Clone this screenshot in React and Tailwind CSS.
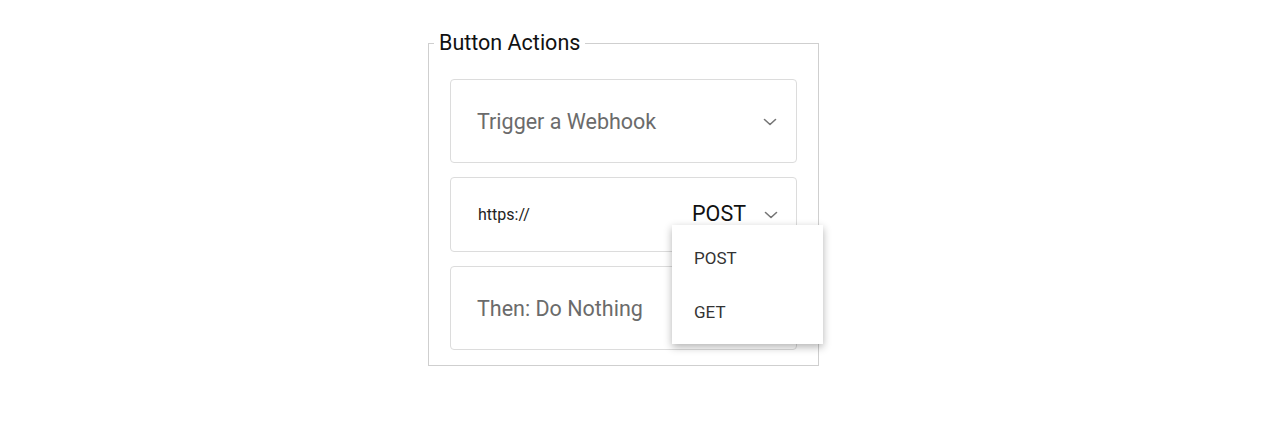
import React from "react";

const Chevron = () => (
  <svg width="14" height="8" viewBox="0 0 14 8" fill="none" className="shrink-0">
    <path d="M1.5 1.5L7 6.5L12.5 1.5" stroke="#757575" strokeWidth="1.6" strokeLinecap="round" strokeLinejoin="round" />
  </svg>
);

const App = () => {
  return (
    <div className="min-h-[431px] bg-white pl-[428px] pt-[31px]" style={{ fontFamily: "Roboto, 'Liberation Sans', sans-serif" }}>
      <fieldset className="w-[391px] border border-[#cfcfcf] px-[21px] pt-[24px] pb-[15px] m-0">
        <legend className="ml-[-16px] px-[5px] text-[21.5px] leading-[24px] text-[#111]">Button Actions</legend>

        <div className="flex flex-col gap-[14px]">
          {/* action select */}
          <div className="h-[84px] rounded-[4px] border border-[#dcdcdc] flex items-center justify-between pl-[26px] pr-[19px] pt-[2px]">
            <span className="text-[21.5px] text-[#6b6b6b]">Trigger a Webhook</span>
            <Chevron />
          </div>

          {/* webhook url + method */}
          <div className="relative h-[75px] rounded-[4px] border border-[#dcdcdc] flex items-center pl-[27px] pr-[18px]">
            <span className="text-[16px] text-[#222]">https://</span>
            <span className="ml-auto text-[21.5px] text-[#111] mr-[18px]">POST</span>
            <Chevron />

            {/* method menu */}
            <div className="absolute left-[221px] top-[47px] w-[151px] h-[119px] bg-white z-10 shadow-[0_3px_8px_rgba(0,0,0,0.3)] flex flex-col pt-[7px] pb-[5px]">
              <div className="h-[54px] flex items-center pl-[22px] text-[17px] text-[#333]">POST</div>
              <div className="h-[54px] flex items-center pl-[22px] text-[17px] text-[#333]">GET</div>
            </div>
          </div>

          {/* then */}
          <div className="h-[84px] rounded-[4px] border border-[#dcdcdc] flex items-center justify-between pl-[26px] pr-[19px] pt-[2px]">
            <span className="text-[21.5px] text-[#6b6b6b]">Then: Do Nothing</span>
            <Chevron />
          </div>
        </div>
      </fieldset>
    </div>
  );
};

export default App;
